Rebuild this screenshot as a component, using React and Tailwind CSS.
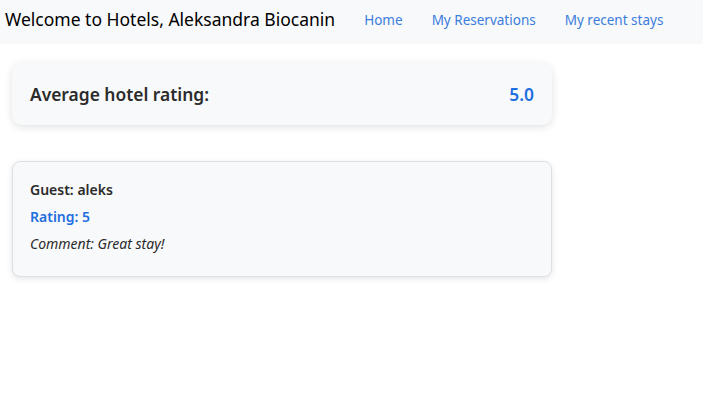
const App = () => {
  return (
    <div className="min-h-screen bg-white text-[#212529]" style={{ fontFamily: '"Noto Sans", sans-serif' }}>
      <nav className="h-[44px] bg-[#f8f9fa] flex items-center px-[5px] pb-[6px]">
        <span className="text-[17.5px] text-black mr-[29px]">Welcome to Hotels, Aleksandra Biocanin</span>
        <div className="flex gap-[29px] text-[13.5px] text-[#3b7ddd] pt-[2px]">
          <span>Home</span>
          <span>My Reservations</span>
          <span>My recent stays</span>
        </div>
      </nav>

      <div className="w-[540px] ml-[12px]">
        <div className="mt-[19px] h-[62px] rounded-[10px] bg-[#f8f9fa] shadow-[0_2px_8px_rgba(0,0,0,0.12)] flex items-center justify-between px-[18px]">
          <span className="text-[17.4px] font-semibold text-[#2b2b2b]">Average hotel rating:</span>
          <span className="text-[17.4px] font-semibold text-[#1f6fe0]">5.0</span>
        </div>

        <div className="mt-[36px] h-[116px] rounded-[8px] border border-[#dcdfe3] bg-[#f8f9fa] shadow-[0_2px_6px_rgba(0,0,0,0.1)] px-[17px] pt-[14px] text-[14px]">
          <p className="font-semibold text-[#2b2b2b] leading-[27px]">Guest: aleks</p>
          <p className="font-semibold text-[#1f6fe0] leading-[27px]">Rating: 5</p>
          <p className="italic text-[#2b2b2b] leading-[27px]">Comment: Great stay!</p>
        </div>
      </div>
    </div>
  )
}

export default App;
